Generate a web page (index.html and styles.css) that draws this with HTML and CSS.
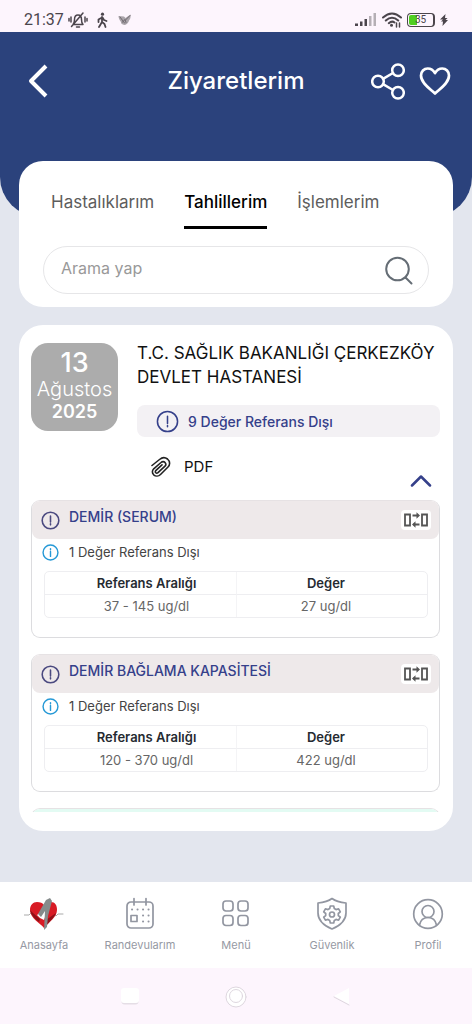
FILE: index.html
```html
<!DOCTYPE html>
<html lang="tr">
<head>
<meta charset="utf-8">
<meta name="viewport" content="width=device-width, initial-scale=1">
<title>Ziyaretlerim</title>
<link rel="stylesheet" href="styles.css">
</head>
<body>
<svg class="defs" aria-hidden="true">
  <symbol id="alert" viewBox="0 0 24 24"><circle cx="12" cy="12" r="10.5"/><path d="M12 6.5v7.5M12 16.2v1.3"/></symbol>
  <symbol id="info" viewBox="0 0 24 24"><circle cx="12" cy="12" r="10.5"/><path d="M12 10.5v7M12 6.5v1.7"/></symbol>
  <symbol id="compare" viewBox="0 0 26 18"><path d="M2 3.5h5v11H2zM19 3.5h5v11h-5z"/><path d="M9.500 4.500h5M10.500 13.500h6"/><path class="tip" d="M13.500 1.200L17 4.500l-3.500 3.300zM12.500 10.200L9 13.500l3.500 3.300z"/></symbol>
</svg>
<div class="app">
  <div class="status">
    <div class="status-side status-left">
      <span class="clock">21:37</span>
      <svg class="i-bell" viewBox="0 0 20 18"><path d="M5 13.500h10c-1.500-1.500-1.500-3-1.500-5C13.500 5.500 12 4 10 4S6.500 5.500 6.500 8.500c0 2 0 3.500-1.500 5zM8.500 16h3M3.500 15.500L15 2M3 6v5M1 7.500v2.500M17 6v5M19 7.500v2.500"/></svg>
      <svg class="i-walk" viewBox="0 0 12 16"><circle cx="6.500" cy="2.200" r="1.600" class="dark"/><path d="M6 5v5l-3 5M6 10l2.500 2 1 3M6 5.500L2.500 7.500v2.500M6.500 5.500l1.500 2.500 2.500 1" /></svg>
      <svg class="i-fly" viewBox="0 0 14 12"><path d="M.5 2L6 2.500l1.500 1.500L12.500.5c.5 3-.5 5-1.500 6-.5 2-2 4-4 4.500-2 0-4-1-4-3C1.500 6 .5 4 .5 2z"/><path class="vein" d="M2 3l4.500 6M4 8.500l3-3 1 3M12 1.500L7.500 6"/></svg>
    </div>
    <div class="status-side">
      <svg class="i-signal" viewBox="0 0 22 14"><path d="M0 10.500h3V13H0zM5 8.500h2.500V13H5zM9.500 6h2.500v7H9.500z"/><path class="pale" d="M14 3h2.500v10H14zM18.500 0H21v13h-2.500z"/></svg>
      <svg class="i-wifi" viewBox="0 0 20 16"><path d="M1 5.500Q10-2.500 19 5.500M3.800 8.500Q10 3 16.200 8.500M6.800 11.200Q10 8.500 12.500 10.500"/><circle cx="9.500" cy="13.300" r="1.500"/><path class="mini" d="M14.500 15v-4M17.500 11v4"/></svg>
      <span class="battery">35</span>
      <svg class="i-bolt" viewBox="0 0 8 12"><path d="M5.500 0L0 5.500h3L1 7.500h2L2.500 12 8 6H5.500L7.500 4H5z"/></svg>
    </div>
  </div>

  <header class="header">
    <div class="bar">
      <button class="icon-btn back" aria-label="Geri"><svg class="i-back" viewBox="0 0 20 34"><path d="M18 2L3 17l15 15"/></svg></button>
      <h1 class="title">Ziyaretlerim</h1>
      <div class="actions">
        <button class="icon-btn" aria-label="Paylaş"><svg class="i-share" viewBox="0 0 34 37"><circle cx="7" cy="18.500" r="5.800"/><circle cx="27" cy="7.300" r="5.800"/><circle cx="27" cy="29.700" r="5.800"/><path d="M12 15.800l10-5.800M12 21.200l10 5.800"/></svg></button>
        <button class="icon-btn" aria-label="Favori"><svg class="i-heart" viewBox="0 0 32 30"><path d="M16 27.500C12 23.500 2 17.500 2 9.500 2 5.500 5 2.500 8.700 2.500c3.300 0 5.800 2 7.300 4.700 1.500-2.700 4-4.700 7.300-4.700C27 2.500 30 5.500 30 9.500c0 8-10 14-14 18z"/></svg></button>
      </div>
    </div>
  </header>

  <main class="main">
    <section class="card filter">
      <nav class="tabs">
        <button class="tab">Hastalıklarım</button>
        <button class="tab tab-on">Tahlillerim</button>
        <button class="tab">İşlemlerim</button>
      </nav>
      <label class="search">
        <input class="search-input" type="text" placeholder="Arama yap" aria-label="Arama yap">
        <svg class="i-search" viewBox="0 0 28 29"><circle cx="12.500" cy="13" r="11.300"/><path d="M20.500 21.500l6 6"/></svg>
      </label>
    </section>

    <section class="card visit">
      <div class="visit-top">
        <div class="date"><span class="day">13</span><span class="month">Ağustos</span><span class="year">2025</span></div>
        <div class="visit-info">
          <h2 class="hospital">T.C. SAĞLIK BAKANLIĞI ÇERKEZKÖY DEVLET HASTANESİ</h2>
          <div class="chip"><svg class="i-alert-lg"><use href="#alert"/></svg>9 Değer Referans Dışı</div>
          <button class="pdf"><svg class="i-clip" viewBox="0 0 22 22"><path d="M2 9.500L9.500 3.500c3-2.500 6-2 8-.5 3 2.500 2.500 6 .5 8l-7.500 7.500c-2 2-5 2-6.800.3-1.800-1.800-1.700-4.300 0-6L11 6.500c1.300-1.200 3-1.200 4 0s1 2.700 0 3.700l-7 6.500c-1 .8-2 .5-2.300 0-.6-.8-.4-1.700.3-2.400l6-5.500"/></svg>PDF</button>
        </div>
      </div>
      <button class="collapse" aria-label="Daralt"><svg class="i-up" viewBox="0 0 22 13"><path d="M2 11.500l9-9 9 9"/></svg></button>
      <div class="results">
        <article class="result">
          <div class="result-head"><svg class="i-alert"><use href="#alert"/></svg><h3 class="result-name">DEMİR (SERUM)</h3><button class="compare" aria-label="Karşılaştır"><svg class="i-compare"><use href="#compare"/></svg></button></div>
          <p class="note"><svg class="i-info"><use href="#info"/></svg>1 Değer Referans Dışı</p>
          <table class="values">
            <tr><th>Referans Aralığı</th><th>Değer</th></tr>
            <tr><td>37 - 145 ug/dl</td><td>27 ug/dl</td></tr>
          </table>
        </article>
        <article class="result">
          <div class="result-head"><svg class="i-alert"><use href="#alert"/></svg><h3 class="result-name">DEMİR BAĞLAMA KAPASİTESİ</h3><button class="compare" aria-label="Karşılaştır"><svg class="i-compare"><use href="#compare"/></svg></button></div>
          <p class="note"><svg class="i-info"><use href="#info"/></svg>1 Değer Referans Dışı</p>
          <table class="values">
            <tr><th>Referans Aralığı</th><th>Değer</th></tr>
            <tr><td>120 - 370 ug/dl</td><td>422 ug/dl</td></tr>
          </table>
        </article>
        <article class="result"><div class="result-head normal"></div></article>
      </div>
    </section>
  </main>

  <nav class="nav">
    <a class="nav-item" href="#"><svg class="i-nav i-logo" viewBox="0 0 40 34"><path class="wave" d="M0 18h5l2-2 2 3 4-2M29 17l3 2 2-2h5"/><path class="red" d="M20 31C16 26 6 21 6 13c0-5 3-8 7-8 3 0 6 1 7 3 2-3 5-4 7-3 4 0 6 3 6 8 0 7-8 12-13 18z"/><path class="deep" d="M20 31l2-8 10-7c-2 5-8 10-12 15zM6 13c1 5 5 9 9 12l1-3-7-6z"/><path class="shine" d="M13 18l8-6 2 3-3 8-4-2z"/><path class="steel" d="M14 17l8-14 4-2 2 3-4 15-1 11-3 3 1-19-4 6z"/></svg>Anasayfa</a>
    <a class="nav-item" href="#"><svg class="i-nav" viewBox="0 0 40 34"><rect x="7" y="5" width="26" height="26" rx="4"/><path d="M14 1.500v6.500M26 1.500v6.500"/><rect x="11" y="18.500" width="6" height="6"/><path class="dots" d="M12 12.500h.1M17.500 12.500h.1M23 12.500h.1M28.500 12.500h.1M23 18.500h.1M28.500 18.500h.1M23 24.500h.1M28.500 24.500h.1"/></svg>Randevularım</a>
    <a class="nav-item" href="#"><svg class="i-nav" viewBox="0 0 40 34"><rect x="7" y="4" width="10" height="10" rx="3"/><rect x="22" y="4" width="10" height="10" rx="3"/><rect x="7" y="18.500" width="10" height="10" rx="3"/><rect x="22" y="18.500" width="10" height="10" rx="3"/></svg>Menü</a>
    <a class="nav-item" href="#"><svg class="i-nav" viewBox="0 0 40 34"><path d="M20 1.500C16 4.500 11 5.500 6 6v10c0 8 7 13 14 16 7-3 14-8 14-16V6c-5-.5-10-1.500-14-4.500z"/><path d="M18.300 9h3.400l.6 2.600 1.700 1 2.600-.8 1.700 3-2 1.700v2l2 1.700-1.700 3-2.600-.8-1.700 1-.6 2.600h-3.400l-.6-2.600-1.700-1-2.600.8-1.700-3 2-1.700v-2l-2-1.700 1.700-3 2.600.8 1.700-1z"/><circle cx="20" cy="17.500" r="2.500"/></svg>Güvenlik</a>
    <a class="nav-item" href="#"><svg class="i-nav" viewBox="0 0 40 34"><circle cx="20" cy="17" r="14.300"/><circle cx="20" cy="14.500" r="6"/><path d="M11.500 28c1-5 4.500-7.500 8.500-7.500s7.500 2.500 8.500 7.500"/></svg>Profil</a>
  </nav>
  <div class="system">
    <svg class="i-sys" viewBox="0 0 26 26"><rect class="fade" x="4.500" y="6.500" width="17" height="15" rx="3"/><rect x="4" y="5" width="18" height="15" rx="3"/></svg>
    <svg class="i-sys" viewBox="0 0 26 26"><circle class="ring" cx="13" cy="14" r="10"/><circle class="ring" cx="13" cy="13" r="6.500"/></svg>
    <svg class="i-sys" viewBox="0 0 26 26"><path d="M5 13l15-8v16z"/><path class="ring" d="M5 14l15 8"/></svg>
  </div>
</div>
</body>
</html>
```
FILE: styles.css
```css
* { box-sizing: border-box; }
body { margin: 0; font-family: Inter, "Open Sans", sans-serif; color: #111; background: #e3e6ee; }
button { border: 0; background: none; padding: 0; font: inherit; color: inherit; }
h1, h2, h3, p { margin: 0; font-weight: 400; }
svg { display: block; flex: none; fill: none; stroke-linecap: round; stroke-linejoin: round; }
.defs { position: absolute; width: 0; height: 0; }
.app { height: 100vh; display: flex; flex-direction: column; }

.status { flex: none; height: 32px; padding: 8px 24px 0; display: flex; justify-content: space-between; background: #fdf5fd; }
.status-side { display: flex; align-items: center; gap: 5px; }
.status-left { gap: 8px; }
.clock { font: 16px/24px Roboto, sans-serif; color: #4b454c; margin-right: -4px; }
.i-bell { width: 20px; height: 18px; stroke: #4b454c; stroke-width: 1.5; }
.i-walk { width: 12px; height: 16px; stroke: #4b454c; stroke-width: 1.8; }
.dark { fill: #4b454c; stroke: none; }
.i-fly { width: 14px; height: 12px; fill: #aaa4aa; margin-left: 2px; }
.vein { stroke: #6f696f; stroke-width: 1; }
.i-signal { width: 22px; height: 14px; fill: #4b454c; }
.pale { fill: #b5afb5; }
.i-wifi { width: 20px; height: 16px; stroke: #4b454c; stroke-width: 2; }
.i-wifi circle { fill: #4b454c; stroke: none; }
.i-wifi .mini { stroke-width: 1.5; }
.battery { width: 28px; height: 14px; border: 1px solid #4b454c; border-right-width: 2px; border-radius: 4px; padding: 1px; text-align: center; font: 10px/10px Roboto, sans-serif; color: #4b454c; background: linear-gradient(90deg, #50cf20 36%, transparent 36%) content-box; }
.i-bolt { width: 8px; height: 12px; fill: #4b454c; }

.header { flex: none; height: 185px; background: #2b427c; border-radius: 0 0 40px 40px; }
.bar { height: 98px; padding: 0 21px; display: grid; grid-template-columns: 80px 1fr 80px; align-items: center; }
.title { text-align: center; font-size: 24px; line-height: 32px; font-weight: 500; color: #fff; }
.actions { display: flex; align-items: center; gap: 14px; }
.icon-btn { justify-self: start; }
.back { padding-left: 7px; }
.i-back { width: 20px; height: 34px; stroke: #fff; stroke-width: 4; stroke-linecap: butt; }
.i-share { width: 34px; height: 37px; stroke: #fff; stroke-width: 2.5; }
.i-heart { width: 32px; height: 30px; stroke: #fff; stroke-width: 2.7; }

.main { flex: 1; min-height: 0; margin-top: -56px; padding: 0 19px 51px; display: flex; flex-direction: column; gap: 18px; }
.card { background: #fff; border-radius: 24px; }
.filter { flex: none; padding: 24px 24px 13px; display: flex; flex-direction: column; gap: 17px; }
.tabs { display: flex; gap: 30px; padding-left: 8px; }
.tab { font-size: 17px; line-height: 34px; height: 44px; color: #5d5d5d; border-bottom: 3px solid transparent; padding-bottom: 7px; }
.tab-on { color: #000; font-weight: 500; border-color: #000; }
.search { display: flex; align-items: center; height: 48px; border: 1px solid #e6e6e8; border-radius: 25px; padding: 0 15px 0 17px; }
.search-input { flex: 1; min-width: 0; border: 0; outline: 0; background: none; padding: 0 0 4px; font: inherit; font-size: 16px; }
.search-input::placeholder { color: #999; }
.i-search { width: 28px; height: 29px; stroke: #656d75; stroke-width: 2; }

.visit { flex: 1; min-height: 0; padding: 18px 13px 19px 12px; display: flex; flex-direction: column; }
.visit-top { display: flex; align-items: flex-start; gap: 19px; }
.date { flex: none; width: 87px; height: 88px; border-radius: 17px; background: #acacac; color: #fff; display: flex; flex-direction: column; align-items: center; justify-content: center; padding-bottom: 2px; }
.day { font-size: 27px; line-height: 28px; font-weight: 500; }
.month { font-size: 20px; line-height: 24px; font-weight: 300; }
.year { font-size: 18px; line-height: 22px; font-weight: 600; }
.visit-info { flex: 1; margin-top: -2px; }
.hospital { font-size: 17px; line-height: 24px; color: #111; }
.chip { margin-top: 16px; height: 32px; border-radius: 8px; background: #f3f1f4; padding-left: 19px; display: flex; align-items: center; gap: 9px; font-size: 14px; font-weight: 500; color: #35408a; }
.i-alert-lg { width: 23px; height: 23px; stroke: #35408a; stroke-width: 1.6; }
.pdf { margin: 18px 0 0 13px; display: flex; align-items: center; gap: 12px; font-size: 15px; line-height: 24px; color: #111; }
.i-clip { width: 22px; height: 22px; stroke: #222; stroke-width: 1.6; }
.collapse { align-self: flex-end; margin: -5px 8px 13px 0; }
.i-up { width: 22px; height: 13px; stroke: #35408a; stroke-width: 2.5; }
.results { flex: 1; min-height: 0; overflow: hidden; display: flex; flex-direction: column; gap: 16px; }
.result { flex: none; border: 1px solid #dcdcdf; border-top-color: #e6e2e4; border-radius: 9px; padding-bottom: 19px; }
.result-head { height: 38px; border-radius: 8px; background: #eee9ea; padding: 0 8px 0 9px; display: flex; align-items: center; gap: 9px; }
.normal { background: #e3fbf3; }
.i-alert { width: 19px; height: 19px; stroke: #4b4a80; stroke-width: 2; }
.result-name { flex: 1; font-size: 14px; line-height: 18px; font-weight: 500; padding-bottom: 6px; color: #35408a; }
.compare { width: 30px; height: 20px; border-radius: 4px; background: #fff; display: grid; place-items: center; }
.i-compare { width: 26px; height: 18px; stroke: #555; stroke-width: 1.8; stroke-linecap: butt; stroke-linejoin: miter; }
.tip { fill: #555; stroke: none; }
.note { display: flex; align-items: center; gap: 10px; padding: 5px 0 10px 10px; font-size: 13px; line-height: 17px; color: #444; }
.i-info { width: 17px; height: 17px; stroke: #2699d6; stroke-width: 2; }
.values { width: calc(100% - 23px); margin: 0 11px 0 12px; table-layout: fixed; border-spacing: 0; border: 1px solid #eeeef1; border-radius: 5px; font-size: 13px; line-height: 22px; text-align: center; }
.values th, .values td { padding: 0 0 0 12px; }
.values th { font-weight: 600; color: #252a31; border-bottom: 1px solid #eeeef1; }
.values td { color: #666; }
.values th + th, .values td + td { padding: 0 12px 0 0; border-left: 1px solid #f4f4f6; }

.nav { flex: none; height: 86px; padding-top: 14px; display: flex; justify-content: space-between; background: #fff; }
.nav-item { width: 88px; display: flex; flex-direction: column; align-items: center; gap: 5px; font-size: 11px; line-height: 16px; color: #9699a3; text-decoration: none; }
.i-nav { width: 40px; height: 36px; stroke: #9296a1; stroke-width: 1.7; }
.dots { stroke-width: 2; }
.i-logo { stroke: none; }
.wave { stroke: #aaa; stroke-width: 1; }
.red { fill: #d81b25; }
.deep { fill: #8d1118; }
.steel { fill: #858b8b; }
.shine { fill: #fff; }
.system { flex: none; height: 56px; padding: 0 117px; display: flex; justify-content: space-between; align-items: center; background: #fdf5fd; }
.i-sys { width: 26px; height: 26px; fill: #fff; }
.ring { stroke: #ded7df; stroke-width: 1; }
.fade { fill: #e5dee6; }
```
